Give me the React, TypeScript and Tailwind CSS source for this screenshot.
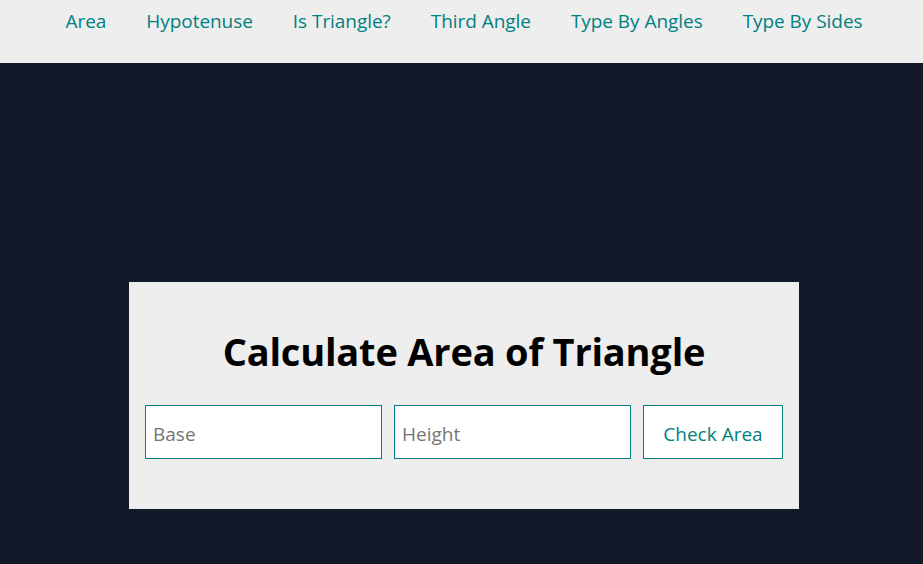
const links = [
  "Area",
  "Hypotenuse",
  "Is Triangle?",
  "Third Angle",
  "Type By Angles",
  "Type By Sides",
];

export default function App() {
  return (
    <div className="min-h-[564px] bg-[#111827] font-['Open_Sans',sans-serif]">
      <nav className="flex h-[63px] items-start justify-center gap-10 bg-[#eeeeee] pl-[5px] pt-[6px]">
        {links.map((link) => (
          <a
            key={link}
            href="#"
            className="text-[19px] leading-[30px] tracking-[-0.05px] text-[#008080]"
          >
            {link}
          </a>
        ))}
      </nav>
      <main className="pl-[5px] pt-[219px]">
        <section className="mx-auto flex w-[670px] flex-col bg-[#eeeeee] px-4 pb-[50px] pt-[44px]">
          <h1 className="text-center text-[38px] font-bold leading-[50px] tracking-[-0.2px] text-black">
            Calculate Area of Triangle
          </h1>
          <div className="mt-[29px] flex gap-3">
            <input
              type="number"
              placeholder="Base"
              className="h-[54px] min-w-0 flex-1 border border-[#008080] bg-white px-[7px] pt-[4px] text-[19px] outline-none placeholder:text-[#757575]"
            />
            <input
              type="number"
              placeholder="Height"
              className="h-[54px] min-w-0 flex-1 border border-[#008080] bg-white px-[7px] pt-[4px] text-[19px] outline-none placeholder:text-[#757575]"
            />
            <button className="h-[54px] w-[140px] border border-[#008080] bg-white pt-[4px] text-[19px] text-[#008080]">
              Check Area
            </button>
          </div>
        </section>
      </main>
    </div>
  );
}
